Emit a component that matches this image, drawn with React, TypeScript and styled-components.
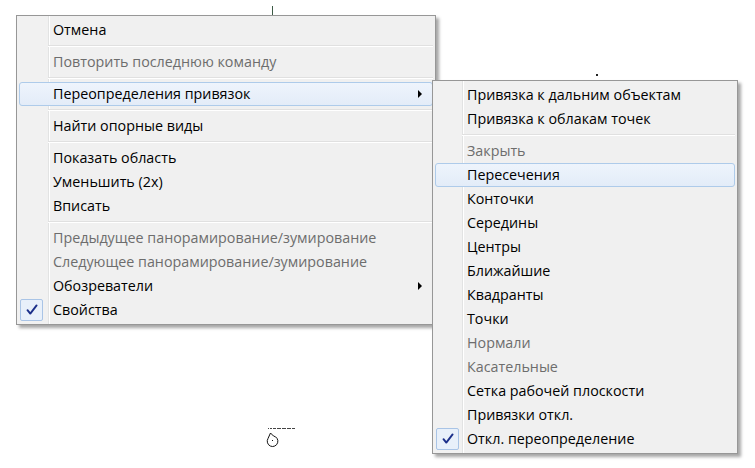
import React from "react";
import styled, { createGlobalStyle } from "styled-components";

const Global = createGlobalStyle`
  html, body { margin: 0; padding: 0; background: #ffffff; }
  body { width: 755px; height: 468px; overflow: hidden; font-family: "Open Sans", "Noto Sans", sans-serif; }
`;

const Canvas = styled.div`
  position: relative;
  width: 755px;
  height: 468px;
  background: #ffffff;
`;

const Menu = styled.div<{ $x: number; $y: number; $w: number; $gutter: number }>`
  position: absolute;
  left: ${(p) => p.$x}px;
  top: ${(p) => p.$y}px;
  width: ${(p) => p.$w}px;
  box-sizing: border-box;
  border: 1px solid #979797;
  padding: 2px;
  display: flex;
  flex-direction: column;
  background: linear-gradient(
    to right,
    #f1f1f1 0 ${(p) => p.$gutter}px,
    #e2e3e3 ${(p) => p.$gutter}px ${(p) => p.$gutter + 1}px,
    #ffffff ${(p) => p.$gutter + 1}px ${(p) => p.$gutter + 2}px,
    #f0f0f0 ${(p) => p.$gutter + 2}px
  );
  background-origin: padding-box;
  box-shadow: 3px 3px 3px rgba(0, 0, 0, 0.35);
`;

const Item = styled.div<{ $disabled?: boolean; $hot?: boolean; $indent: number }>`
  height: 24px;
  box-sizing: border-box;
  display: grid;
  grid-template-columns: ${(p) => p.$indent}px 1fr auto;
  align-items: center;
  padding-right: 10px;
  font-size: 14.3px;
  color: ${(p) => (p.$disabled ? "#6d6d6d" : "#000000")};
  border: 1px solid ${(p) => (p.$hot ? "#aecbea" : "transparent")};
  border-radius: 3px;
  background: ${(p) =>
    p.$hot ? "linear-gradient(#eef4fc, #e3ecf8)" : "transparent"};
  white-space: nowrap;
`;

const IconCell = styled.span`
  display: flex;
  align-items: center;
  height: 100%;
`;

const Label = styled.span`
  line-height: 1;
`;

const Arrow = styled.span`
  width: 0;
  height: 0;
  border-left: 4px solid #000;
  border-top: 4px solid transparent;
  border-bottom: 4px solid transparent;
`;

const Separator = styled.div<{ $gutter: number }>`
  height: 8px;
  margin-left: ${(p) => p.$gutter}px;
  display: flex;
  flex-direction: column;
  justify-content: center;
  &::before {
    content: "";
    display: block;
    height: 1px;
    background: #e0e0e0;
  }
  &::after {
    content: "";
    display: block;
    height: 1px;
    background: #ffffff;
  }
`;

const CheckBox = styled.span`
  width: 23px;
  height: 22px;
  box-sizing: border-box;
  border: 1px solid #a9c4e6;
  border-radius: 2px;
  background: #e8f0fa;
  display: flex;
  align-items: center;
  justify-content: center;
`;

const Check = () => (
  <CheckBox>
    <svg width="12" height="12" viewBox="0 0 12 12">
      <path
        d="M1.5 6.2 L4.3 9.6 L10.6 1.4"
        fill="none"
        stroke="#1b2f8a"
        strokeWidth="1.9"
        strokeLinecap="round"
        strokeLinejoin="round"
      />
    </svg>
  </CheckBox>
);

const Tick = styled.div`
  position: absolute;
  left: 272px;
  top: 6px;
  width: 1px;
  height: 10px;
  background: #3c5a46;
`;

const Speck = styled.div`
  position: absolute;
  left: 596px;
  top: 74px;
  width: 2px;
  height: 2px;
  background: #222;
`;

const Cursor = styled.svg`
  position: absolute;
  left: 264px;
  top: 424px;
`;

type Entry =
  | { kind: "sep" }
  | {
      kind: "item";
      text: string;
      disabled?: boolean;
      hot?: boolean;
      sub?: boolean;
      checked?: boolean;
    };

const main: Entry[] = [
  { kind: "item", text: "Отмена" },
  { kind: "sep" },
  { kind: "item", text: "Повторить последнюю команду", disabled: true },
  { kind: "sep" },
  { kind: "item", text: "Переопределения привязок", hot: true, sub: true },
  { kind: "sep" },
  { kind: "item", text: "Найти опорные виды" },
  { kind: "sep" },
  { kind: "item", text: "Показать область" },
  { kind: "item", text: "Уменьшить (2x)" },
  { kind: "item", text: "Вписать" },
  { kind: "sep" },
  { kind: "item", text: "Предыдущее панорамирование/зумирование", disabled: true },
  { kind: "item", text: "Следующее панорамирование/зумирование", disabled: true },
  { kind: "item", text: "Обозреватели", sub: true },
  { kind: "item", text: "Свойства", checked: true },
];

const snaps: Entry[] = [
  { kind: "item", text: "Привязка к дальним объектам" },
  { kind: "item", text: "Привязка к облакам точек" },
  { kind: "sep" },
  { kind: "item", text: "Закрыть", disabled: true },
  { kind: "item", text: "Пересечения", hot: true },
  { kind: "item", text: "Конточки" },
  { kind: "item", text: "Середины" },
  { kind: "item", text: "Центры" },
  { kind: "item", text: "Ближайшие" },
  { kind: "item", text: "Квадранты" },
  { kind: "item", text: "Точки" },
  { kind: "item", text: "Нормали", disabled: true },
  { kind: "item", text: "Касательные", disabled: true },
  { kind: "item", text: "Сетка рабочей плоскости" },
  { kind: "item", text: "Привязки откл." },
  { kind: "item", text: "Откл. переопределение", checked: true },
];

const renderEntries = (list: Entry[], indent: number, gutter: number) =>
  list.map((e, i) =>
    e.kind === "sep" ? (
      <Separator key={i} $gutter={gutter} />
    ) : (
      <Item key={i} $disabled={e.disabled} $hot={e.hot} $indent={indent}>
        <IconCell>{e.checked && <Check />}</IconCell>
        <Label>{e.text}</Label>
        {e.sub ? <Arrow /> : <span />}
      </Item>
    )
  );

export default function App() {
  return (
    <Canvas>
      <Global />
      <Tick />
      <Speck />
      <Cursor width="34" height="28" viewBox="0 0 34 28">
        <path d="M4 4.5 h1 M6 4.5 h2 M9 4.5 h3 M13 4.5 h4 M18 4.5 h4 M23 4.5 h4 M28 4.5 h3" stroke="#444" strokeWidth="1" />
        <path
          d="M6.5 9 L4 14.5 A5.3 5.3 0 1 0 9.5 12 Z"
          fill="none"
          stroke="#111"
          strokeWidth="1"
        />
        <rect x="8" y="16" width="1" height="1" fill="#111" />
      </Cursor>
      <Menu $x={16} $y={15} $w={420} $gutter={31}>
        {renderEntries(main, 33, 29)}
      </Menu>
      <Menu $x={432} $y={80} $w={306} $gutter={29}>
        {renderEntries(snaps, 31, 27)}
      </Menu>
    </Canvas>
  );
}
